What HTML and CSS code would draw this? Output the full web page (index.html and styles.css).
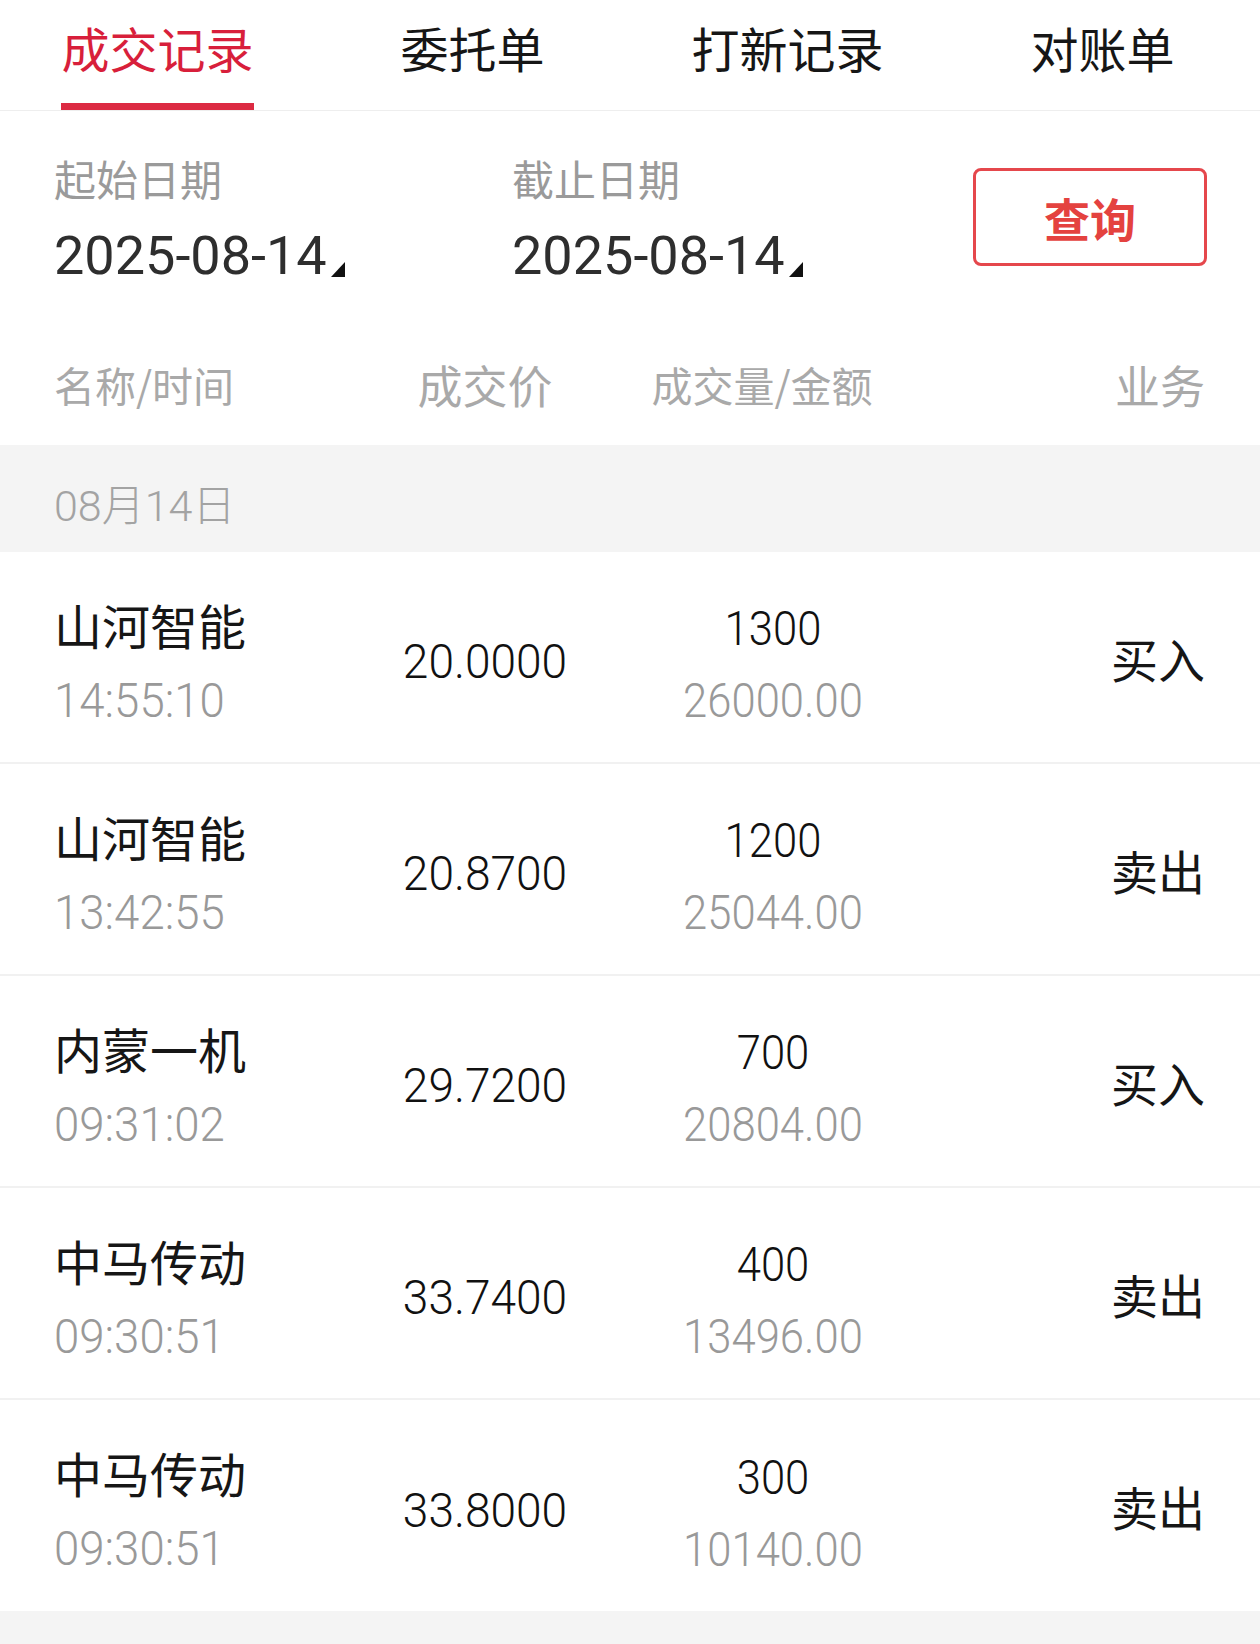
FILE: index.html
```html
<!DOCTYPE html>
<html lang="zh-CN">
<head>
  <meta charset="UTF-8">
  <meta name="viewport" content="width=device-width, initial-scale=1.0">
  <title>成交记录</title>
  <link rel="stylesheet" href="styles.css">
</head>
<body>
  <div class="page">
    <nav class="tabs" aria-label="交易查询">
      <a href="#" class="tab active"><span>成交记录</span></a>
      <a href="#" class="tab"><span>委托单</span></a>
      <a href="#" class="tab"><span>打新记录</span></a>
      <a href="#" class="tab"><span>对账单</span></a>
    </nav>

    <section class="filter">
      <div class="field">
        <div class="field-label">起始日期</div>
        <div class="field-value">2025-08-14<svg class="corner" width="14" height="15" viewBox="0 0 14 15"><polygon points="14,0 14,15 0,15" fill="#111"/></svg></div>
      </div>
      <div class="field">
        <div class="field-label">截止日期</div>
        <div class="field-value">2025-08-14<svg class="corner" width="14" height="15" viewBox="0 0 14 15"><polygon points="14,0 14,15 0,15" fill="#111"/></svg></div>
      </div>
      <button class="query-btn" type="button">查询</button>
    </section>

    <div class="list-head">
      <span class="h-name">名称/时间</span>
      <span class="h-price">成交价</span>
      <span class="h-qty">成交量/金额</span>
      <span class="h-type">业务</span>
    </div>

    <div class="day"><span class="day-label">08月14日</span></div>

    <ul class="trades">
      <li class="trade">
        <div class="c-name"><div class="stock">山河智能</div><div class="sub">14:55:10</div></div>
        <div class="c-price num">20.0000</div>
        <div class="c-qty"><div class="num">1300</div><div class="sub">26000.00</div></div>
        <div class="c-type">买入</div>
      </li>
      <li class="trade">
        <div class="c-name"><div class="stock">山河智能</div><div class="sub">13:42:55</div></div>
        <div class="c-price num">20.8700</div>
        <div class="c-qty"><div class="num">1200</div><div class="sub">25044.00</div></div>
        <div class="c-type">卖出</div>
      </li>
      <li class="trade">
        <div class="c-name"><div class="stock">内蒙一机</div><div class="sub">09:31:02</div></div>
        <div class="c-price num">29.7200</div>
        <div class="c-qty"><div class="num">700</div><div class="sub">20804.00</div></div>
        <div class="c-type">买入</div>
      </li>
      <li class="trade">
        <div class="c-name"><div class="stock">中马传动</div><div class="sub">09:30:51</div></div>
        <div class="c-price num">33.7400</div>
        <div class="c-qty"><div class="num">400</div><div class="sub">13496.00</div></div>
        <div class="c-type">卖出</div>
      </li>
      <li class="trade">
        <div class="c-name"><div class="stock">中马传动</div><div class="sub">09:30:51</div></div>
        <div class="c-price num">33.8000</div>
        <div class="c-qty"><div class="num">300</div><div class="sub">10140.00</div></div>
        <div class="c-type">卖出</div>
      </li>
    </ul>
  </div>
</body>
</html>
```

FILE: styles.css
```css
html, body {
  margin: 0;
  padding: 0;
  background: #f4f4f4;
  font-family: "Noto Sans CJK SC", sans-serif;
  color: #161616;
}

.page {
  width: 1260px;
  min-height: 1644px;
  background: #f4f4f4;
}

/* onglets */
.tabs {
  display: flex;
  background: #fff;
  border-bottom: 1px solid #eeeeee;
}

.tab {
  flex: 1;
  text-align: center;
  text-decoration: none;
  color: #161616;
  font-size: 48px;
}

.tab span {
  display: inline-block;
  line-height: 70px;
  padding: 12px 0 21px;
  border-bottom: 7px solid transparent;
}

.tab.active {
  color: #d81f3b;
}

.tab.active span {
  border-bottom-color: #dc2a42;
}

/* dates */
.filter {
  display: grid;
  grid-template-columns: 458px 1fr 234px;
  align-items: center;
  padding: 37px 53px 0 54px;
  background: #fff;
}

.field-label {
  font-size: 42px;
  line-height: 60px;
  color: #9a9a9a;
}

.field-value {
  margin-top: 13px;
  font-family: Roboto, sans-serif;
  font-size: 54px;
  line-height: 70px;
  color: #2e2e2e;
}

.corner {
  margin-left: 4px;
  vertical-align: -3px;
}

.query-btn {
  width: 234px;
  height: 98px;
  margin-top: -5px;
  border: 3px solid #e5474c;
  border-radius: 8px;
  background: #fff;
  color: #e4423f;
  font-family: "Noto Sans CJK SC", sans-serif;
  font-size: 46px;
  font-weight: bold;
  cursor: pointer;
}

/* en-tete du tableau */
.list-head {
  display: grid;
  grid-template-columns: 276px 310px 266px 1fr;
  align-items: center;
  height: 154px;
  padding: 32px 55px 0 54px;
  box-sizing: border-box;
  background: #fff;
  color: #a9a9a9;
  font-size: 41px;
}

.h-price {
  text-align: center;
  font-size: 45px;
}

.h-qty {
  text-align: center;
  padding-right: 22px;
}

.h-type {
  text-align: right;
  font-size: 45px;
}

.day {
  display: flex;
  align-items: center;
  height: 107px;
  padding: 6px 54px 0;
  box-sizing: border-box;
}

.day-label {
  font-family: Roboto, "Noto Sans CJK SC", sans-serif;
  font-size: 43px;
  font-weight: 300;
  color: #a3a3a3;
}

/* lignes */
.trades {
  list-style: none;
  margin: 0;
  padding: 0;
}

.trade {
  display: grid;
  grid-template-columns: 276px 310px 266px 1fr;
  align-items: center;
  height: 212px;
  padding: 10px 55px 0 54px;
  box-sizing: border-box;
  background: #fff;
  border-bottom: 2px solid #f1f1f1;
}

.trade:last-child {
  border-bottom: none;
  height: 211px;
}

/* chiffres etroits facon DIN */
.num,
.sub {
  font-family: Roboto, sans-serif;
  font-size: 49px;
  font-weight: 300;
  line-height: 64px;
  color: #111;
  transform: scaleX(0.89);
}

.stock {
  font-size: 48px;
  line-height: 64px;
}

.sub {
  color: #999;
}

.c-name .sub {
  margin-top: 13px;
  transform: scaleX(0.93);
  transform-origin: left center;
}

.c-price {
  text-align: center;
  transform: scaleX(0.94);
}

.c-qty {
  padding-top: 6px;
  text-align: center;
}

.c-qty .sub {
  margin-top: 8px;
}

.c-type {
  margin-bottom: 10px;
  text-align: right;
  font-size: 47px;
}
```
